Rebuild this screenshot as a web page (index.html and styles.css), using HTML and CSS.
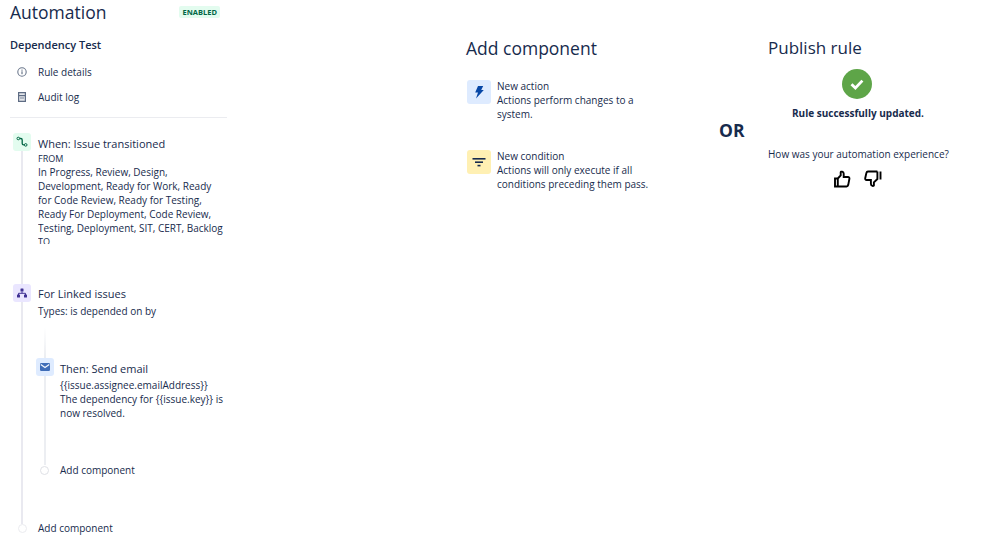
FILE: index.html
```html
<!DOCTYPE html>
<html lang="en">
<head>
<meta charset="utf-8">
<title>Automation</title>
<link rel="stylesheet" href="styles.css">
</head>
<body>
<div class="page">
  <aside class="side">
    <header class="top">
      <h1>Automation</h1>
      <span class="lozenge">ENABLED</span>
    </header>
    <h2 class="rule-name">Dependency Test</h2>
    <nav class="links">
      <div class="link">
        <svg class="ico" viewBox="0 0 12 12"><circle cx="6" cy="6" r="4.2" fill="none" stroke="#6b778c" stroke-width="1.1"/><rect x="5.4" y="5.3" width="1.2" height="2.900" fill="#6b778c"/><rect x="5.4" y="3.600" width="1.2" height="1.100" fill="#6b778c"/></svg>
        <span>Rule details</span>
      </div>
      <div class="link">
        <svg class="ico" viewBox="0 0 12 12"><path d="M2.600 1.600h6.800v8.800H2.600z" fill="#e4e6ea" stroke="#5e6c84" stroke-width="1.200"/><rect x="3" y="4" width="6" height="1.200" fill="#5e6c84"/><rect x="4" y="6.500" width="4" height="1" fill="#7a869a"/></svg>
        <span>Audit log</span>
      </div>
    </nav>
    <hr class="rule">
    <div class="flow">
      <div class="step when">
        <div class="badge green"><svg viewBox="0 0 18 18"><path d="M6.300 5.500h1.500q1.400 0 1.400 1.400v3.600q0 1.400 1.400 1.400h.7" fill="none" stroke="#006644" stroke-width="1.300"/><circle cx="5.300" cy="5.500" r="1.300" fill="#e3fcef" stroke="#006644" stroke-width="1"/><circle cx="12.700" cy="11.900" r="1.300" fill="#e3fcef" stroke="#006644" stroke-width="1"/></svg></div>
        <div class="body">
          <div class="title">When: Issue transitioned</div>
          <div class="clip">
            <div class="label">FROM</div>
            <div>In Progress, Review, Design, Development, Ready for Work, Ready for Code Review, Ready for Testing, Ready For Deployment, Code Review, Testing, Deployment, SIT, CERT, Backlog</div>
            <div class="label">TO</div>
          </div>
        </div>
      </div>
      <div class="step branch">
        <div class="badge purple"><svg viewBox="0 0 18 18"><rect x="7.500" y="4.500" width="3" height="3" rx=".5" fill="#403294"/><path d="M5.500 11V9.300h7V11M9 7.500V9.300" fill="none" stroke="#403294" stroke-width="1"/><rect x="4" y="10.500" width="3" height="3" rx=".5" fill="#403294"/><rect x="11" y="10.500" width="3" height="3" rx=".5" fill="#403294"/></svg></div>
        <div class="body">
          <div class="title">For Linked issues</div>
          <div class="desc">Types: is depended on by</div>
        </div>
      </div>
      <div class="nested">
        <div class="step then">
          <div class="badge blue"><svg viewBox="0 0 18 18"><rect x="4" y="5" width="10" height="8" rx="1.200" fill="#3f6db8"/><path d="M4.800 6.600L9 9.600l4.200-3" fill="none" stroke="#f4f8ff" stroke-width="1.200"/></svg></div>
          <div class="body">
            <div class="title">Then: Send email</div>
            <div class="desc">{{issue.assignee.emailAddress}}<br>The dependency for {{issue.key}} is now resolved.</div>
          </div>
        </div>
        <div class="add inner"><span class="dot"></span><span>Add component</span></div>
      </div>
      <div class="add outer"><span class="dot"></span><span>Add component</span></div>
    </div>
  </aside>
  <section class="component">
    <h2 class="head">Add component</h2>
    <div class="option">
      <div class="tile blue"><svg viewBox="0 0 24 24"><path d="M11 6h5.200l-2 4h2.600L9 18.500l2-6H8.200z" fill="#0747a6"/></svg></div>
      <div class="opt-text"><div>New action</div><div>Actions perform changes to a system.</div></div>
    </div>
    <div class="option">
      <div class="tile yellow"><svg viewBox="0 0 24 24"><rect x="5.500" y="8" width="13" height="1.600" fill="#172b4d"/><rect x="8" y="11.400" width="8" height="1.600" fill="#172b4d"/><rect x="10.500" y="14.800" width="3" height="1.600" fill="#172b4d"/></svg></div>
      <div class="opt-text"><div>New condition</div><div>Actions will only execute if all conditions preceding them pass.</div></div>
    </div>
  </section>
  <div class="or">OR</div>
  <section class="publish">
    <h2 class="head">Publish rule</h2>
    <div class="tick"><svg viewBox="0 0 30 30"><circle cx="15" cy="15" r="15" fill="#5ea548"/><path d="M9.500 15.200l3.900 3.800 7-7.400" fill="none" stroke="#fff" stroke-width="2.800"/></svg></div>
    <div class="done">Rule successfully updated.</div>
    <div class="ask">How was your automation experience?</div>
    <div class="thumbs">
      <svg viewBox="0 0 18 18"><path d="M2 8.500h2.800v8H2zM4.800 8.500l2.900-3.200V2.200c0-.9 3-1 3 1.600v3.200h4.300c1.100 0 1.600.8 1.400 1.700l-1.200 6.400c-.2.800-.8 1.400-1.600 1.400H4.800" fill="none" stroke="#000" stroke-width="1.900"/></svg>
      <svg viewBox="0 0 18 18"><path d="M16.500 1.500v8M13.400 1.500H4c-.8 0-1.400.6-1.600 1.400L1.200 8.300c-.2.900.3 1.700 1.400 1.700h4.300v3.800c0 2.600 3 2.500 3 1.600v-3.100l3.500-3.300V1.500" fill="none" stroke="#000" stroke-width="1.900"/></svg>
    </div>
  </section>
</div>
</body>
</html>
```
FILE: styles.css
```css
* { box-sizing: border-box; }
html, body { margin: 0; height: 100%; background: #fff; }
body { font-family: "Open Sans", "Noto Sans", sans-serif; font-size: 10px; line-height: 14px; color: #172b4d; overflow: hidden; }
.page { display: flex; width: 997px; height: 560px; overflow: hidden; }
.side { width: 217px; margin-left: 10px; flex: none; }
.top { display: flex; justify-content: space-between; align-items: center; height: 24px; }
h1 { margin: 0; font-size: 17.500px; font-weight: 500; line-height: 24px; }
.lozenge { margin-right: 7px; padding: 0 3px; height: 12px; line-height: 12px; font-size: 7.500px; font-weight: 700; color: #006644; background: #e3fcef; border-radius: 2px; }
.rule-name { margin: 13px 0 0; font-size: 11px; line-height: 16px; font-weight: 600; }
.links { margin-top: 12px; }
.link { display: flex; align-items: center; height: 14px; margin-bottom: 11px; padding-left: 6px; gap: 10px; }
.ico { width: 12px; height: 12px; flex: none; }
.rule { margin: 13px 0 0; border: 0; border-top: 1px solid #ebecf0; }
.flow { position: relative; margin-top: 15px; }
.flow::before { content: ""; position: absolute; left: 11px; top: 18px; width: 2px; bottom: 11px; background: #e9e9f0; }
.step { position: relative; display: flex; gap: 7px; }
.badge { width: 18px; height: 18px; border-radius: 3px; flex: none; }
.badge svg { display: block; width: 18px; height: 18px; }
.badge.green { background: #e3fcef; margin-left: 3px; }
.badge.purple { background: #eae6ff; margin-left: 3px; }
.badge.blue { background: #deebff; }
.body { width: 185px; }
.title { font-size: 11px; line-height: 16px; margin-top: 3px; }
.clip { height: 92px; overflow: hidden; }
.label { font-size: 9px; line-height: 13px; }
.when { height: 151px; }
.branch .title { margin-top: 2px; }
.desc { margin-top: 2px; }
.nested { position: relative; margin-left: 26px; padding-top: 40px; }
.nested::before { content: ""; position: absolute; left: 8px; top: 9px; width: 2px; bottom: 12px; background: linear-gradient(#fff, #eceef2 30px); }
.then { gap: 6px; }
.then .body { width: 165px; }
.then .desc { margin-top: 1px; }
.add { position: relative; display: flex; align-items: center; gap: 11px; height: 14px; }
.dot { width: 9px; height: 9px; border: 1px solid #dfe1e6; border-radius: 50%; background: #fff; flex: none; }
.add.inner { margin-top: 43px; margin-left: 4px; }
.add.outer { margin-top: 44px; margin-left: 8px; }
.add.outer .dot { border-color: #ebecf0; }
.component { width: 190px; margin-left: 239px; flex: none; padding-top: 37px; }
.head { margin: 0; font-size: 17.500px; line-height: 22px; font-weight: 500; }
.option { display: flex; gap: 6px; height: 70px; margin-left: 1px; }
.head + .option { margin-top: 21px; }
.tile { width: 24px; height: 24px; border-radius: 3px; flex: none; }
.tile svg { display: block; width: 24px; height: 24px; }
.tile.blue { background: #deebff; }
.tile.yellow { background: #fff0b3; }
.opt-text { width: 155px; margin-top: -1px; }
.or { margin: 120px 0 0 63px; flex: none; font-size: 17.500px; line-height: 20px; font-weight: 700; width: 30px; }
.publish { margin-left: 19px; width: 180px; flex: none; padding-top: 37px; }
.publish .head { font-size: 17px; }
.tick { width: 30px; height: 30px; margin: 10px 0 0 74px; }
.tick svg { display: block; width: 30px; height: 30px; }
.done { margin-top: 7px; text-align: center; font-weight: 700; white-space: nowrap; }
.ask { margin-top: 27px; white-space: nowrap; }
.thumbs { display: flex; gap: 13px; margin: 9px 0 0 65px; }
.thumbs svg { width: 18px; height: 18px; }
```
